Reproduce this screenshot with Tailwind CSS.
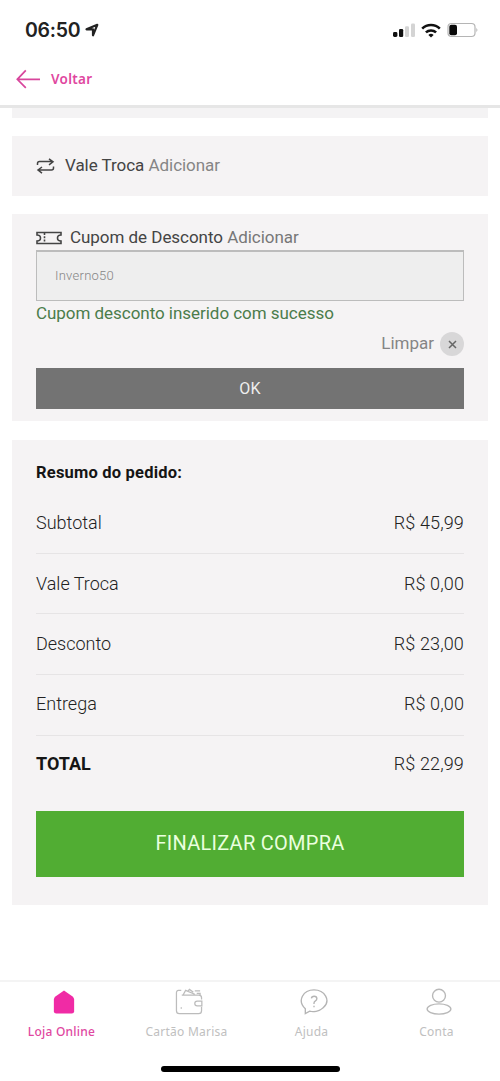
<!DOCTYPE html>
<html lang="pt-BR">
<head>
<meta charset="utf-8">
<meta name="viewport" content="width=device-width, initial-scale=1">
<title>Resumo do pedido</title>
<script src="https://cdn.jsdelivr.net/npm/@tailwindcss/browser@4"></script>
</head>
<body class="bg-white font-['Roboto',sans-serif] text-[#444]">
<div class="flex h-[1081px] w-[500px] flex-col overflow-hidden">
  <!-- Status bar -->
  <div class="flex h-[60px] shrink-0 items-center pr-[21px] pl-[25px]">
    <span class="pt-[2px] font-['Inter',sans-serif] text-[19.5px] font-semibold tracking-[-0.25px] text-[#222]">06:50</span>
    <svg class="ml-[5px] h-[14px] w-[14px]" viewBox="0 0 14 14" fill="none" stroke="#222" stroke-width="2.200" stroke-linejoin="round"><path d="M1.500 6.300 12.300 1.800 8 12.300V6.400z"/></svg>
    <svg class="ml-auto h-[16px] w-[24px]" viewBox="0 0 24 16"><rect x="1" y="10" width="4.400" height="5" rx="1.400" fill="#111"/><rect x="7" y="7" width="4.200" height="8" rx="1.200" fill="#111"/><rect x="13" y="4.300" width="4" height="10.700" rx="1.200" fill="#d4d4d4"/><rect x="19" y="1.500" width="4" height="13.500" rx="1.200" fill="#d4d4d4"/></svg>
    <svg class="ml-[5px] h-[15px] w-[20px]" viewBox="0 0 20 15" fill="none" stroke="#111" stroke-width="2.500"><path d="M1.200 5.700C6 .8 14 .8 18.800 5.700M4.900 9.400C7.700 6.700 12.300 6.700 15.100 9.400"/><path d="M10 14.500 7.400 11.900Q10 9.800 12.600 11.900z" fill="#111" stroke="none"/></svg>
    <svg class="ml-[6px] h-[16px] w-[32px]" viewBox="0 0 32 16"><rect x="1" y="1.500" width="27" height="13" rx="3.500" fill="#fff" stroke="#b5b5b5" stroke-width="1.200"/><rect x="2.300" y="2.800" width="7.700" height="10.400" rx="2" fill="#0a0a0a"/><path d="M29.500 5.800q1.800 2.200 0 4.400z" fill="#999"/></svg>
  </div>
  <!-- Header -->
  <div class="flex h-[48px] shrink-0 items-center border-b-[3px] border-[#e6e6e6] pb-[7px] pl-[16px]">
    <svg class="h-[20px] w-[25px]" viewBox="0 0 25 20" fill="none" stroke="#d8469c" stroke-width="1.700"><path d="M24 10.300H1.500M9.800 1.300 1.300 10.300 9.800 18.800"/></svg>
    <span class="ml-[10px] pt-[1px] font-['Noto_Sans',sans-serif] text-[13.500px] font-semibold tracking-[0.3px] text-[#e0479f]">Voltar</span>
  </div>
  <!-- Content -->
  <main class="flex flex-1 flex-col px-[12px]">
    <div class="h-[10px] bg-[#f4f3f4]"></div>
    <section class="mt-[18px] flex h-[60px] items-center bg-[#f5f3f4] px-[24px] text-[17px] tracking-[-0.04px]">
      <svg class="h-[16px] w-[19px]" viewBox="0 0 19 16" fill="none" stroke="#444" stroke-width="1.500"><path d="M1.500 7V5.500q0-2 2-2H16M13 .8 17 3.800 13 6.800M17.500 8.500V10q0 2-2 2H3M6 9 2 12 6 15.200"/></svg>
      <p class="ml-[10px] whitespace-nowrap pb-[1px]">Vale Troca <span class="text-[#858585]">Adicionar</span></p>
    </section>
    <section class="mt-[18px] flex h-[207px] flex-col bg-[#f5f3f4] px-[24px] pt-[12px]">
      <div class="flex h-[24px] items-center text-[17px] tracking-[-0.04px]">
        <svg class="h-[14px] w-[26px]" viewBox="0 0 26 14" fill="none" stroke="#444" stroke-width="1.600"><path d="M1 1.500H25V4Q21.500 4 21.500 7T25 10V12.500H1V10Q4.500 10 4.500 7T1 4z"/><path d="M8.500 2V12" stroke-dasharray="2 1.300"/></svg>
        <p class="ml-[8px] whitespace-nowrap">Cupom de Desconto <span class="text-[#777]">Adicionar</span></p>
      </div>
      <div class="flex h-[51px] items-center border border-t-2 border-[#bcbcbc] bg-[#eee] px-[18px] text-[13px] font-light tracking-[0.25px] text-[#858585]">Inverno50</div>
      <p class="text-[17px] leading-[24px] tracking-[-0.04px] text-[#4b7c4b]">Cupom desconto inserido com sucesso</p>
      <div class="mt-[7px] flex h-[24px] items-center justify-end text-[17px] text-[#858585]">
        <span>Limpar</span>
        <span class="ml-[6px] flex h-[24px] w-[24px] items-center justify-center rounded-full bg-[#d8d7d8]"><svg class="h-[9px] w-[9px]" viewBox="0 0 9 9" stroke="#666" stroke-width="1.500"><path d="M1 1 8 8M8 1 1 8"/></svg></span>
      </div>
      <button class="mt-[12px] h-[41px] bg-[#737373] text-[16px] tracking-[0.2px] text-[#eee]">OK</button>
    </section>
    <section class="mt-[19px] flex h-[465px] flex-col bg-[#f5f3f4] px-[24px] pt-[20px]">
      <h2 class="h-[32px] text-[16.500px] leading-[26px] font-bold tracking-[0.2px] text-[#151515]">Resumo do pedido:</h2>
      <div class="flex flex-col text-[18px] font-light text-[#222]">
        <div class="flex h-[62px] items-center justify-between border-b border-[#e6e4e5]"><span>Subtotal</span><span class="tracking-[0.13px]">R$ 45,99</span></div>
        <div class="flex h-[60px] items-center justify-between border-b border-[#e6e4e5]"><span>Vale Troca</span><span class="tracking-[0.13px]">R$ 0,00</span></div>
        <div class="flex h-[61px] items-center justify-between border-b border-[#e6e4e5] pb-[2px]"><span>Desconto</span><span class="tracking-[0.13px]">R$ 23,00</span></div>
        <div class="flex h-[61px] items-center justify-between border-b border-[#e6e4e5] pb-[3px]"><span>Entrega</span><span class="tracking-[0.13px]">R$ 0,00</span></div>
        <div class="flex h-[58px] items-center justify-between pb-[3px]"><span class="font-bold text-[#151515]">TOTAL</span><span class="tracking-[0.13px]">R$ 22,99</span></div>
      </div>
      <button class="mt-[17px] h-[66px] bg-[#51ad33] pb-[2px] text-[20px] tracking-[0.27px] text-[#eaffdf]">FINALIZAR COMPRA</button>
    </section>
  </main>
  <!-- Tab bar -->
  <nav class="grid h-[86px] shrink-0 grid-cols-4 border-t-2 border-[#f4f4f4] pt-[6px] font-['Noto_Sans',sans-serif] text-[12px] tracking-[0.25px] text-[#c0c0c0]">
    <div class="flex flex-col items-center gap-[7px] pr-[2px]">
      <svg class="ml-[4px] h-[28px] w-[28px]" viewBox="0 0 28 29"><path d="M14 2.500 22.500 8.500Q24.500 10 24.500 12V24Q24.500 26.500 22 26.500H6Q3.500 26.500 3.500 24V12Q3.500 10 5.500 8.500z" fill="#f02ba5"/></svg>
      <span class="leading-[18px] font-medium text-[#e0479f]">Loja Online</span>
    </div>
    <div class="flex flex-col items-center gap-[7px] pr-[2px]">
      <svg class="ml-[4px] h-[28px] w-[28px]" viewBox="0 0 28 29" fill="none" stroke="#bcbcbc" stroke-width="1.300"><path d="M6 2.500H3Q1 2.500 1 5V23.500Q1 26.500 4 26.500H24Q27 26.500 27 23.500V19.500M27 12V10Q27 7.500 24 7.500H6.500M8 7 10.500 2.500 20 6.500M12.500 3.500 14.500 1.500 18.500 4.500M20 3H25.500M22 5.500H25.500V7.500"/><path d="M27.300 13.500H22.500Q20 13.500 20 16T22.500 18.500H27.300z"/><path d="M6 20V21.500"/></svg>
      <span class="leading-[18px]">Cartão Marisa</span>
    </div>
    <div class="flex flex-col items-center gap-[7px] pr-[2px]">
      <svg class="ml-[4px] h-[28px] w-[28px]" viewBox="0 0 28 29" fill="none" stroke="#b4b4b4" stroke-width="1.400"><path d="M5 26.500V21.500C-4 13 3 2 14 2S32 13 23.500 20.500C19 24.500 13 25 9.500 24z"/><path d="M11.300 10.800Q11.500 8.500 14.200 8.500T17 11Q17 12.500 15.500 13.300T14 15.500V16.500M14 18.300V20"/></svg>
      <span class="leading-[18px]">Ajuda</span>
    </div>
    <div class="flex flex-col items-center gap-[7px] pr-[2px]">
      <svg class="ml-[4px] h-[28px] w-[28px]" viewBox="0 0 28 29" fill="none" stroke="#b8b8b8" stroke-width="1.400"><circle cx="14" cy="8" r="6.700"/><ellipse cx="14" cy="21.700" rx="12.300" ry="5.300"/></svg>
      <span class="leading-[18px]">Conta</span>
    </div>
  </nav>
  <div class="flex h-[15px] shrink-0 justify-center"><div class="h-[6px] w-[179px] rounded-full bg-black"></div></div>
</div>
</body>
</html>
